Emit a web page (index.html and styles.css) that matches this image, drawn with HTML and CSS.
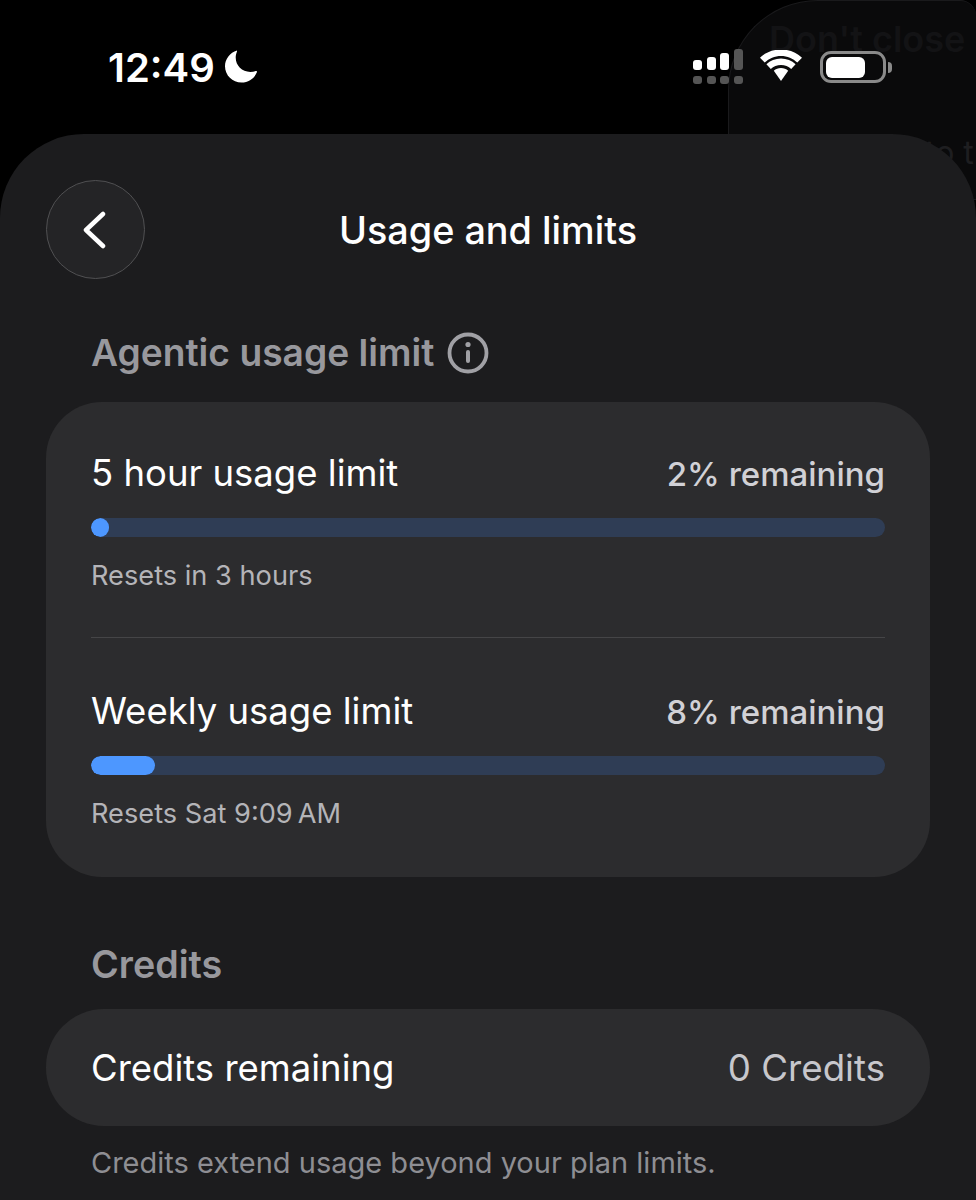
FILE: index.html
```html
<!DOCTYPE html>
<html lang="en">
<head>
    <meta charset="UTF-8">
    <meta name="viewport" content="width=device-width, initial-scale=1.0">
    <title>Usage and limits</title>
    <link rel="stylesheet" href="styles.css">
</head>
<body>
    <div class="backdrop">
        <span class="backdrop-title">Don't close</span>
        <span class="backdrop-line">to t</span>
    </div>

    <header class="status-bar">
        <div class="status-time">
            <span>12:49</span>
            <svg class="moon" viewBox="0 0 34 34" width="34" height="34"><path fill="#fff" d="M13 1.500C6 3.600 1 10 1 17.300 1 26.400 8.500 33.500 17.600 33.500c7 0 13-4.200 15.400-10.400.3-.8-.4-1.400-1.200-1.100-1.700.7-3.600 1-5.500 1C18 23 11.700 16.600 11.700 8.600c0-2 .5-4.200 1.300-6 .3-.7-.2-1.300-.9-1.100z"/></svg>
        </div>
        <div class="status-icons">
            <svg class="signal" viewBox="0 0 50 36" width="50" height="36">
                <rect x="0" y="11" width="9" height="10" rx="3" fill="#fff"/>
                <rect x="14" y="8" width="9" height="13" rx="3" fill="#fff"/>
                <rect x="27" y="4" width="9" height="17" rx="3" fill="#fff"/>
                <rect x="41" y="0" width="9" height="21" rx="3" fill="#555"/>
                <rect x="0" y="27" width="9" height="8" rx="3" fill="#555"/>
                <rect x="14" y="27" width="9" height="8" rx="3" fill="#555"/>
                <rect x="27" y="27" width="9" height="8" rx="3" fill="#555"/>
                <rect x="41" y="27" width="9" height="8" rx="3" fill="#555"/>
            </svg>
            <svg class="wifi" viewBox="0 0 44 32" width="44" height="32">
                <path fill="#fff" d="M22 6c6.300 0 12 2.500 16.300 6.600l4.700-4.900C37.500 2.400 30.100-.5 22-.5S6.500 2.400 1 7.700l4.700 4.900C10 8.500 15.700 6 22 6z"/>
                <path fill="#fff" d="M22 15c3.900 0 7.500 1.500 10.200 4l4.400-4.700C32.800 10.800 27.700 8.600 22 8.600S11.200 10.800 7.400 14.300l4.400 4.700C14.500 16.500 18.100 15 22 15z"/>
                <path fill="#fff" d="M22 18c-2.800 0-5.300 1-7.200 2.800L22 31l7.200-10.200C27.300 19 24.800 18 22 18z"/>
            </svg>
            <div class="battery">
                <div class="battery-body"><div class="battery-fill"></div></div>
                <div class="battery-cap"></div>
            </div>
        </div>
    </header>

    <main class="sheet">
        <div class="nav">
            <button class="back-btn">
                <svg viewBox="0 0 24 38" width="24" height="38"><path d="M21 3 4 19l17 16" fill="none" stroke="#fff" stroke-width="4.500" stroke-linecap="round" stroke-linejoin="round"/></svg>
            </button>
            <h1 class="nav-title">Usage and limits</h1>
        </div>

        <h2 class="section-title section-agentic">
            Agentic usage limit
            <svg class="info" viewBox="0 0 42 42" width="42" height="42">
                <circle cx="21" cy="21" r="18.500" fill="none" stroke="#a0a0a5" stroke-width="3.800"/>
                <circle cx="21" cy="12.500" r="2.600" fill="#a0a0a5"/>
                <rect x="19" y="18" width="4" height="13" rx="2" fill="#a0a0a5"/>
            </svg>
        </h2>

        <section class="card">
            <div class="limit limit-first">
                <div class="limit-head">
                    <span class="limit-name">5 hour usage limit</span>
                    <span class="limit-value">2% remaining</span>
                </div>
                <div class="bar"><div class="bar-fill" style="width: 2.3%"></div></div>
                <div class="limit-note">Resets in 3 hours</div>
            </div>
            <div class="limit limit-second">
                <div class="limit-head">
                    <span class="limit-name">Weekly usage limit</span>
                    <span class="limit-value">8% remaining</span>
                </div>
                <div class="bar"><div class="bar-fill" style="width: 8%"></div></div>
                <div class="limit-note">Resets Sat 9:09&#8239;AM</div>
            </div>
        </section>

        <h2 class="section-title section-credits">Credits</h2>

        <section class="credits-row">
            <span class="credits-label">Credits remaining</span>
            <span class="credits-value">0 Credits</span>
        </section>

        <p class="credits-note">Credits extend usage beyond your plan limits.</p>
    </main>
</body>
</html>
```

FILE: styles.css
```css
html, body {
    height: 1200px;
}
body {
    margin: 0;
    position: relative;
    overflow: hidden;
    background-color: #000;
    color: #fff;
    font-family: 'Inter', 'Liberation Sans', sans-serif;
}

/* the card peeking out behind the sheet */
.backdrop {
    position: absolute;
    top: 0;
    left: 728px;
    width: 248px;
    height: 200px;
    box-sizing: border-box;
    background-color: #0a0a0b;
    border: 1px solid #1a1a1c;
    border-right: none;
    border-radius: 90px 16px 0 0;
    overflow: hidden;
}
.backdrop-title {
    position: absolute;
    top: 16px;
    left: 40px;
    font-size: 36px;
    font-weight: 600;
    white-space: nowrap;
    color: #131315;
}
.backdrop-line {
    position: absolute;
    top: 132px;
    left: 196px;
    font-size: 32px;
    white-space: nowrap;
    color: #1e1e20;
}

.status-bar {
    position: relative;
    height: 134px;
    display: flex;
    justify-content: space-between;
    box-sizing: border-box;
    padding: 42px 84px 0 108px;
}
.status-time {
    display: flex;
    align-items: center;
    gap: 9px;
    height: 50px;
    font-size: 40px;
    font-weight: 600;
}
.moon {
    margin-top: -3px;
}
.status-icons {
    display: flex;
    align-items: center;
    gap: 17px;
    height: 50px;
}
.signal {
    margin-right: -1px;
}
.wifi {
    margin-top: -2px;
}
.battery {
    display: flex;
    align-items: center;
    gap: 2px;
}
.battery-body {
    width: 66px;
    height: 32px;
    box-sizing: border-box;
    border: 3px solid #8a8a8a;
    border-radius: 11px;
    padding: 2.500px;
}
.battery-fill {
    width: 39px;
    height: 100%;
    background-color: #fff;
    border-radius: 6px;
}
.battery-cap {
    width: 4px;
    height: 11px;
    background-color: #8a8a8a;
    border-radius: 0 4px 4px 0;
}

.sheet {
    position: relative;
    height: 1066px;
    box-sizing: border-box;
    padding: 46px 46px 0;
    background-color: #1c1c1e;
    border-radius: 84px 84px 0 0;
}

.nav {
    position: relative;
    height: 99px;
    display: flex;
    align-items: center;
    justify-content: center;
}
.back-btn {
    position: absolute;
    top: 0;
    left: 0;
    width: 99px;
    height: 99px;
    padding: 0 3px 0 0;
    display: flex;
    align-items: center;
    justify-content: center;
    background-color: #242426;
    border: 1.500px solid #505052;
    border-radius: 50%;
}
.nav-title {
    margin: 0;
    font-size: 37.800px;
    font-weight: 500;
}

.section-title {
    margin: 0;
    color: #98989d;
    font-size: 37.200px;
    line-height: 44px;
    font-weight: 600;
}
.section-agentic {
    margin-top: 52px;
    padding-left: 45px;
    display: flex;
    align-items: center;
    gap: 13px;
}
.section-credits {
    margin-top: 65px;
    padding-left: 45px;
    font-size: 37.700px;
}

.card {
    margin-top: 27px;
    box-sizing: border-box;
    height: 475px;
    padding: 0 45px;
    background-color: #2c2c2e;
    border-radius: 56px;
}
.limit {
    box-sizing: border-box;
    height: 238px;
    padding-top: 47px;
}
.limit-first {
    height: 236px;
    border-bottom: 1.500px solid #454547;
}
.limit-second {
    padding-top: 49px;
}
.limit-head {
    display: flex;
    justify-content: space-between;
    align-items: center;
    height: 48px;
}
.limit-name {
    font-size: 36.500px;
}
.limit-value {
    padding-top: 2px;
    font-size: 33px;
    font-weight: 500;
    color: #d1d1d6;
}
.bar {
    margin-top: 21px;
    height: 19px;
    background-color: #2f3d55;
    border-radius: 10px;
    overflow: hidden;
}
.bar-fill {
    height: 100%;
    background-color: #4d97ff;
    border-radius: 10px;
}
.limit-note {
    margin-top: 22px;
    font-size: 27.200px;
    line-height: 34px;
    color: #b4b4b8;
}

.credits-row {
    margin-top: 23px;
    height: 117px;
    box-sizing: border-box;
    padding: 0 45px;
    display: flex;
    justify-content: space-between;
    align-items: center;
    background-color: #2c2c2e;
    border-radius: 58px;
}
.credits-label {
    font-size: 36.500px;
}
.credits-value {
    font-size: 36.700px;
    color: #c7c7cc;
}
.credits-note {
    margin: 19px 0 0;
    padding-left: 45px;
    font-size: 29px;
    line-height: 36px;
    color: #8e8e93;
}
```
